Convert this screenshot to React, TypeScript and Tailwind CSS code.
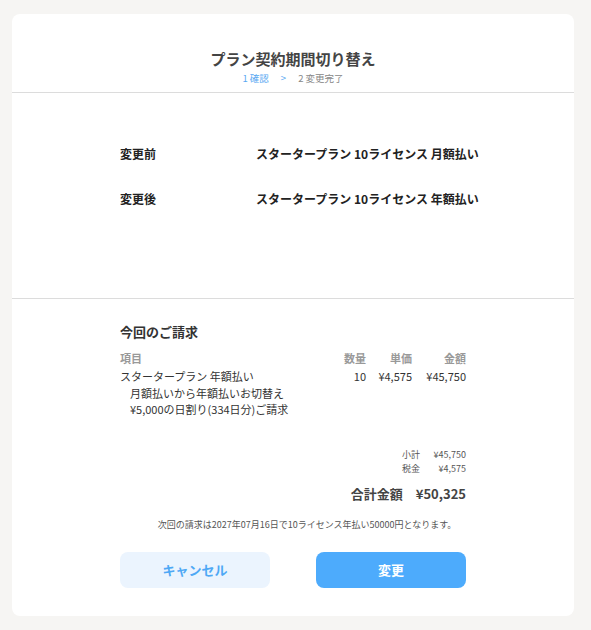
const rows = [
  { label: "変更前", value: "スタータープラン 10ライセンス 月額払い" },
  { label: "変更後", value: "スタータープラン 10ライセンス 年額払い" },
];

export default function App() {
  return (
    <div
      className="min-h-[630px] bg-[#f6f5f3] pt-[14px] px-3 text-[#333]"
      style={{ fontFamily: '"Noto Sans CJK JP", "Noto Sans", sans-serif' }}
    >
      <div className="w-[562px] h-[602px] bg-white rounded-lg flex flex-col">
        {/* header */}
        <div className="pt-[34px] pb-[7px] border-b border-[#dcdcdc] flex flex-col items-center">
          <h1 className="text-[15px] leading-[22px] font-bold text-[#444]">プラン契約期間切り替え</h1>
          <div className="mt-[1px] flex items-center text-[9.5px] leading-[14px] text-[#888]">
            <span className="text-[#5aa9f2]">1 確認</span>
            <span className="text-[#5aa9f2] mx-[12px]">&gt;</span>
            <span>2 変更完了</span>
          </div>
        </div>

        {/* plan change */}
        <div className="px-[108px] pt-[51px] pb-[89px] border-b border-[#dcdcdc] flex flex-col gap-[25px]">
          {rows.map((r) => (
            <div key={r.label} className="flex text-[12px] leading-[20px] font-bold text-[#222] whitespace-nowrap">
              <span className="w-[136px] shrink-0">{r.label}</span>
              <span>{r.value}</span>
            </div>
          ))}
        </div>

        {/* billing */}
        <div className="px-[108px] pt-[23px] flex flex-col">
          <h2 className="text-[13px] leading-[20px] font-bold text-[#333]">今回のご請求</h2>
          <div className="mt-[6px] grid grid-cols-[1fr_40px_46px_54px] text-[11px] leading-[20px] font-bold text-[#999]">
            <span>項目</span>
            <span className="text-right">数量</span>
            <span className="text-right">単価</span>
            <span className="text-right">金額</span>
          </div>
          <div className="grid grid-cols-[1fr_40px_46px_54px] text-[11px] leading-[16.5px] text-[#333]">
            <div className="flex flex-col">
              <span>スタータープラン 年額払い</span>
              <span className="pl-[10px]">月額払いから年額払いお切替え</span>
              <span className="pl-[10px]">¥5,000の日割り(334日分)ご請求</span>
            </div>
            <span className="text-right">10</span>
            <span className="text-right">¥4,575</span>
            <span className="text-right">¥45,750</span>
          </div>

          <div className="mt-[30px] flex flex-col items-end text-[9px] leading-[14px] text-[#555]">
            <div className="flex gap-3">
              <span>小計</span>
              <span className="w-[34px] text-right">¥45,750</span>
            </div>
            <div className="flex gap-3">
              <span>税金</span>
              <span className="w-[34px] text-right">¥4,575</span>
            </div>
          </div>
          <div className="mt-[8px] flex justify-end gap-[13px] text-[13px] leading-[20px] font-bold text-[#444]">
            <span>合計金額</span>
            <span>¥50,325</span>
          </div>

          <p className="mt-[14px] pl-[28px] text-center text-[9px] leading-[14px] text-[#555]">
            次回の請求は2027年07月16日で10ライセンス年払い50000円となります。
          </p>

          <div className="mt-[20px] flex justify-between">
            <button className="w-[150px] h-[36px] rounded-lg bg-[#ebf4fe] text-[#4ea8f5] text-[13px] font-bold">
              キャンセル
            </button>
            <button className="w-[150px] h-[36px] rounded-lg bg-[#4dabfc] text-white text-[13px] font-bold">
              変更
            </button>
          </div>
        </div>
      </div>
    </div>
  );
}
